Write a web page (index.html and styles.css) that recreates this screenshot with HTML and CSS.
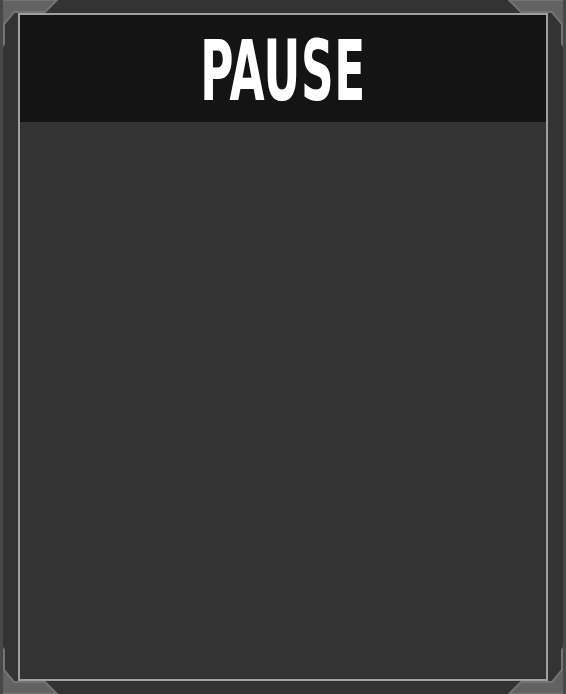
FILE: index.html
```html
<!DOCTYPE html>
<html lang="en">
<head>
    <meta charset="UTF-8">
    <meta name="viewport" content="width=device-width, initial-scale=1.0">
    <title>Pause</title>
    <link rel="stylesheet" href="styles.css">
</head>
<body>
    <div class="panel">
        <div class="frame">
            <div class="header">
                <h1><span>PAUSE</span></h1>
            </div>
            <div class="content"></div>
        </div>

        <!-- corner brackets -->
        <svg class="corner tl" width="60" height="52" viewBox="0 0 60 52">
            <polygon points="0,0 57,0 45,12 14,12 4,24 4,44 0,50" fill="#626262" stroke="#747474" stroke-width="2"/>
        </svg>
        <svg class="corner tr" width="60" height="52" viewBox="0 0 60 52">
            <polygon points="0,0 57,0 45,12 14,12 4,24 4,44 0,50" fill="#626262" stroke="#747474" stroke-width="2"/>
        </svg>
        <svg class="corner bl" width="60" height="52" viewBox="0 0 60 52">
            <polygon points="0,0 57,0 45,12 14,12 4,24 4,44 0,50" fill="#626262" stroke="#747474" stroke-width="2"/>
        </svg>
        <svg class="corner br" width="60" height="52" viewBox="0 0 60 52">
            <polygon points="0,0 57,0 45,12 14,12 4,24 4,44 0,50" fill="#626262" stroke="#747474" stroke-width="2"/>
        </svg>
    </div>
</body>
</html>
```

FILE: styles.css
```css
body {
    margin: 0;
    background-color: #333333;
    font-family: "DejaVu Sans Condensed", "DejaVu Sans", sans-serif;
}

.panel {
    position: relative;
    box-sizing: border-box;
    width: 566px;
    height: 694px;
    background-color: #333333;
    border-left: 3px solid #484848;
    border-right: 3px solid #484848;
    padding: 13px 15px;
    overflow: hidden;
}

.frame {
    box-sizing: border-box;
    height: 100%;
    border: 2px solid #a0a0a0;
    display: flex;
    flex-direction: column;
}

.header {
    height: 107px;
    background-color: #141414;
    display: flex;
    align-items: center;
    justify-content: center;
}

.header h1 {
    margin: 0;
    color: #ffffff;
    font-size: 84px;
    font-weight: bold;
    line-height: 1;
}

.header h1 span {
    display: inline-block;
    transform: scaleX(0.6);
    letter-spacing: 1px;
    padding-top: 4px;
}

.content {
    flex: 1;
    background-color: #333333;
}

.corner {
    position: absolute;
    filter: blur(0.7px);
}

.corner.tl { top: 0; left: -3px; }
.corner.tr { top: 0; right: -3px; transform: scaleX(-1); }
.corner.bl { bottom: 0; left: -3px; transform: scaleY(-1); }
.corner.br { bottom: 0; right: -3px; transform: scale(-1, -1); }
```
